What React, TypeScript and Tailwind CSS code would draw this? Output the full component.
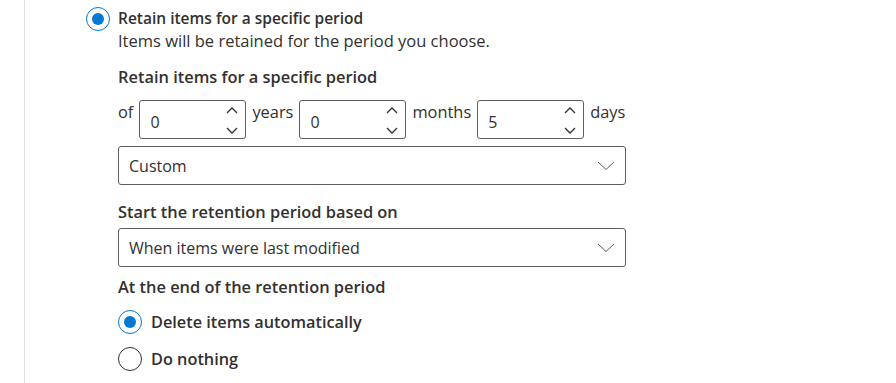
import type { ReactNode } from "react";

const font = { fontFamily: '"Open Sans", "Noto Sans", Arial, sans-serif' };

function Radio({ checked }: { checked?: boolean }) {
  return (
    <span
      className={`flex h-6 w-6 shrink-0 items-center justify-center rounded-full border ${
        checked ? "border-[#0078d4]" : "border-[#323130]"
      } bg-white`}
    >
      {checked && <span className="h-3 w-3 rounded-full bg-[#0078d4]" />}
    </span>
  );
}

function SpinBox({ value }: { value: string }) {
  return (
    <div className="relative flex h-[39px] w-[107px] shrink-0 rounded-[3px] border border-[#605e5c] bg-white">
      <span className="pl-[10px] pt-[11px] text-[16px] leading-[20px] text-[#323130]">
        {value}
      </span>
      <div className="absolute right-[7px] top-[6px] flex flex-col gap-[13px]">
        <svg width="12" height="7" viewBox="0 0 12 7" fill="none">
          <path d="M1 6L6 1L11 6" stroke="#323130" strokeWidth="1.3" />
        </svg>
        <svg width="12" height="7" viewBox="0 0 12 7" fill="none">
          <path d="M1 1L6 6L11 1" stroke="#323130" strokeWidth="1.3" />
        </svg>
      </div>
    </div>
  );
}

function Dropdown({ value }: { value: string }) {
  return (
    <div className="flex h-[39px] w-[508px] items-center justify-between rounded-[3px] border border-[#605e5c] bg-white pl-[10px] pr-[10px]">
      <span className="text-[16px] leading-[20px] text-[#323130]">{value}</span>
      <svg width="18" height="10" viewBox="0 0 18 10" fill="none">
        <path d="M1 1L9 8.5L17 1" stroke="#605e5c" strokeWidth="1" />
      </svg>
    </div>
  );
}

function Label({ children }: { children: ReactNode }) {
  return (
    <div className="text-[16.4px] leading-[24px] text-[#323130]">{children}</div>
  );
}

function Heading({ children, className = "" }: { children: ReactNode; className?: string }) {
  return (
    <div className={`text-[16.4px] font-semibold leading-[24px] text-[#323130] ${className}`}>
      {children}
    </div>
  );
}

export default function App() {
  return (
    <div className="flex h-[383px] w-[896px] overflow-hidden bg-white" style={font}>
      <div className="h-full w-[25px] shrink-0 border-r border-[#e1dfdd]" />
      <div className="flex flex-col pl-[61px] pt-[7px]">
        <div className="flex items-start gap-2">
          <Radio checked />
          <div>
            <div className="text-[15.5px] font-semibold leading-[22px] text-[#323130]">
              Retain items for a specific period
            </div>
            <div className="text-[16.5px] leading-[24px] text-[#323130]">
              Items will be retained for the period you choose.
            </div>

            <Heading className="mt-[12px]">Retain items for a specific period</Heading>

            <div className="mt-[11px] flex items-start gap-[6px]">
              <Label>of</Label>
              <SpinBox value="0" />
              <Label>years</Label>
              <SpinBox value="0" />
              <Label>months</Label>
              <SpinBox value="5" />
              <Label>days</Label>
            </div>

            <div className="mt-[7px]">
              <Dropdown value="Custom" />
            </div>

            <Heading className="mt-[15px]">Start the retention period based on</Heading>
            <div className="mt-[4px]">
              <Dropdown value="When items were last modified" />
            </div>

            <Heading className="mt-[8px]">At the end of the retention period</Heading>

            <div className="mt-[11px] flex items-center gap-[9px]">
              <Radio checked />
              <span className="text-[16.3px] font-semibold leading-[24px] text-[#323130]">
                Delete items automatically
              </span>
            </div>
            <div className="mt-[13px] flex items-center gap-[9px]">
              <Radio />
              <span className="text-[16.3px] font-semibold leading-[24px] text-[#323130]">
                Do nothing
              </span>
            </div>
          </div>
        </div>
      </div>
    </div>
  );
}
